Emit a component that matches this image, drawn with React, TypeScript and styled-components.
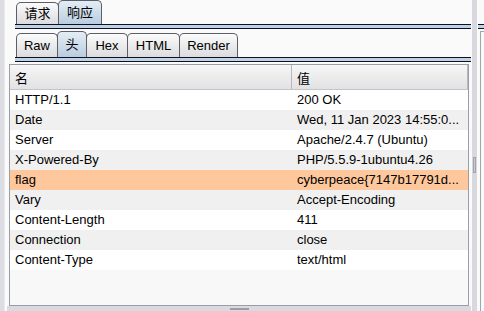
import styled, { createGlobalStyle } from "styled-components";

const GlobalStyle = createGlobalStyle`
  html, body {
    margin: 0;
    padding: 0;
    background: #fafafa;
  }
  body {
    font-family: "Liberation Sans", "Noto Sans CJK SC", Arial, sans-serif;
    font-size: 13px;
    color: #000;
  }
`;

const Frame = styled.div`
  display: flex;
  width: 484px;
  height: 311px;
  overflow: hidden;
  background: #fafafa;
`;

const LeftStrip = styled.div`
  width: 4px;
  background: #dcdce3;
  border-right: 1px solid #ebebef;
`;

const Main = styled.div`
  width: 466px;
  display: flex;
  flex-direction: column;
`;

const TabRow = styled.div<{ $h: number }>`
  height: ${(p) => p.$h}px;
  display: flex;
  align-items: flex-end;
  padding-left: 11px;
`;

const Tab = styled.div<{ $active?: boolean; $tall: number; $w: number }>`
  position: relative;
  width: ${(p) => p.$w + 1}px;
  height: ${(p) => (p.$active ? p.$tall + 2 : p.$tall)}px;
  box-sizing: border-box;
  display: flex;
  align-items: center;
  justify-content: center;
  margin-right: -1px;
  border: 1px solid #5e5e68;
  border-bottom: none;
  border-radius: 5px 5px 0 0;
  background: ${(p) =>
    p.$active
      ? "linear-gradient(#e4edf5, #b9cde0)"
      : "linear-gradient(#fbfbfb, #dcdcdf)"};
  z-index: ${(p) => (p.$active ? 2 : 1)};
  font-size: 13px;
  line-height: 1;
  white-space: nowrap;
`;

const Band = styled.div<{ $left?: number }>`
  height: 3px;
  margin-left: ${(p) => p.$left ?? 10}px;
  border-top: 1px solid #101020;
  border-bottom: 1px solid #101020;
  background: #bfd3e7;
`;

const Table = styled.div`
  margin: 2px 2px 0 4px;
  height: 242px;
  box-sizing: border-box;
  border: 1px solid #9c9ca6;
  background: #f8f8f8;
  display: flex;
  flex-direction: column;
`;

const Header = styled.div`
  display: grid;
  grid-template-columns: 282px 1fr;
  height: 25px;
  box-sizing: border-box;
  border-bottom: 1px solid #c4c4c8;
  background: linear-gradient(#f6f6f6, #e2e2e4);
`;

const HeadCell = styled.div`
  display: flex;
  align-items: center;
  padding-left: 5px;
  border-right: 1px solid #b8b8bc;
`;

const Row = styled.div<{ $bg: string }>`
  display: grid;
  grid-template-columns: 282px 1fr;
  height: 20px;
  line-height: 20px;
  background: ${(p) => p.$bg};
`;

const Cell = styled.div`
  padding-left: 5px;
  white-space: nowrap;
  overflow: hidden;
`;

const HScroll = styled.div`
  margin-left: 2px;
  height: 5px;
  background: #d9d9df;
  display: flex;
  justify-content: center;
  align-items: center;
`;

const HThumb = styled.div`
  width: 19px;
  height: 2px;
  background: #9c9ca6;
`;

const VScroll = styled.div`
  width: 5px;
  margin-left: 1px;
  background: #d8d8de;
  display: flex;
  flex-direction: column;
  align-items: center;
  padding-top: 157px;
  box-sizing: border-box;
`;

const VThumb = styled.div`
  width: 3px;
  height: 16px;
  box-sizing: border-box;
  border: 1px solid #a2a2aa;
  background: #cacad2;
`;

const RightPanel = styled.div`
  flex: 1;
  display: flex;
  flex-direction: column;
  padding-top: 24px;
`;

const SidePane = styled.div`
  flex: 1;
  margin: 2px 0 0 3px;
  border-left: 1px solid #a4a4ac;
  border-top: 1px solid #a4a4ac;
`;

const topTabs: [string, number][] = [
  ["请求", 42],
  ["响应", 43],
];

const viewTabs: [string, number][] = [
  ["Raw", 41],
  ["头", 29],
  ["Hex", 41],
  ["HTML", 52],
  ["Render", 58],
];

const rows: [string, string][] = [
  ["HTTP/1.1", "200 OK"],
  ["Date", "Wed, 11 Jan 2023 14:55:0..."],
  ["Server", "Apache/2.4.7 (Ubuntu)"],
  ["X-Powered-By", "PHP/5.5.9-1ubuntu4.26"],
  ["flag", "cyberpeace{7147b17791d..."],
  ["Vary", "Accept-Encoding"],
  ["Content-Length", "411"],
  ["Connection", "close"],
  ["Content-Type", "text/html"],
];

const HIGHLIGHT = 4;

export default function App() {
  return (
    <>
      <GlobalStyle />
      <Frame>
        <LeftStrip />
        <Main>
          <TabRow $h={24}>
            {topTabs.map(([label, w], i) => (
              <Tab key={label} $tall={22} $w={w} $active={i === 1}>
                {label}
              </Tab>
            ))}
          </TabRow>
          <Band />
          <TabRow $h={28}>
            {viewTabs.map(([label, w], i) => (
              <Tab key={label} $tall={24} $w={w} $active={i === 1}>
                {label}
              </Tab>
            ))}
          </TabRow>
          <Band />
          <Table>
            <Header>
              <HeadCell>名</HeadCell>
              <HeadCell>值</HeadCell>
            </Header>
            {rows.map(([name, value], i) => (
              <Row
                key={name}
                $bg={i === HIGHLIGHT ? "#ffc89c" : i % 2 ? "#f0f0f0" : "#ffffff"}
              >
                <Cell>{name}</Cell>
                <Cell>{value}</Cell>
              </Row>
            ))}
          </Table>
          <HScroll>
            <HThumb />
          </HScroll>
        </Main>
        <VScroll>
          <VThumb />
        </VScroll>
        <RightPanel>
          <Band $left={1} />
          <SidePane />
        </RightPanel>
      </Frame>
    </>
  );
}
